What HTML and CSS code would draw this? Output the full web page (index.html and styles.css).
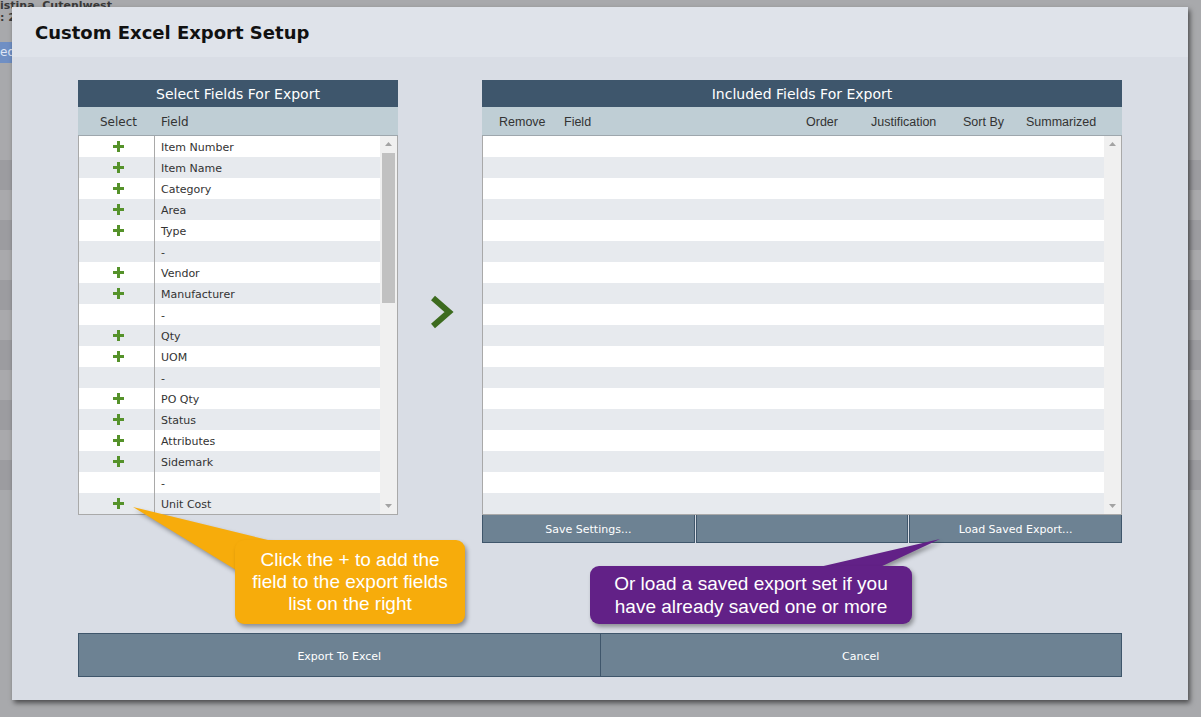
FILE: index.html
```html
<!DOCTYPE html>
<html>
<head>
<meta charset="utf-8">
<link rel="stylesheet" href="styles.css">
</head>
<body>
<div class="backdrop">
  <div class="bg-top">istina&nbsp;&nbsp;Cutenlwest<br>: 2</div>
  <div class="bg-btn">ed</div>
  <div class="bg-rows">
    <div class="bg-row"></div><div class="bg-row alt"></div><div class="bg-row"></div><div class="bg-row alt"></div>
    <div class="bg-row"></div><div class="bg-row alt"></div><div class="bg-row"></div><div class="bg-row alt"></div>
    <div class="bg-row"></div><div class="bg-row alt"></div><div class="bg-row"></div><div class="bg-row alt"></div>
  </div>
</div>

<div class="modal">
  <div class="modal-header">Custom Excel Export Setup</div>
  <div class="modal-body">
    <div class="panels">
      <div class="panel left">
        <div class="panel-title">Select Fields For Export</div>
        <div class="col-head left-head">
          <span class="h-select">Select</span>
          <span class="h-field">Field</span>
        </div>
        <div class="list-wrap">
          <div class="list">
            <div class="row"><span class="sel"><svg class="plus" viewBox="0 0 11 11"><rect x="4" y="0" width="3" height="11"/><rect x="0" y="4" width="11" height="3"/></svg></span><span class="fld">Item Number</span></div>
            <div class="row alt"><span class="sel"><svg class="plus" viewBox="0 0 11 11"><rect x="4" y="0" width="3" height="11"/><rect x="0" y="4" width="11" height="3"/></svg></span><span class="fld">Item Name</span></div>
            <div class="row"><span class="sel"><svg class="plus" viewBox="0 0 11 11"><rect x="4" y="0" width="3" height="11"/><rect x="0" y="4" width="11" height="3"/></svg></span><span class="fld">Category</span></div>
            <div class="row alt"><span class="sel"><svg class="plus" viewBox="0 0 11 11"><rect x="4" y="0" width="3" height="11"/><rect x="0" y="4" width="11" height="3"/></svg></span><span class="fld">Area</span></div>
            <div class="row"><span class="sel"><svg class="plus" viewBox="0 0 11 11"><rect x="4" y="0" width="3" height="11"/><rect x="0" y="4" width="11" height="3"/></svg></span><span class="fld">Type</span></div>
            <div class="row alt"><span class="sel"></span><span class="fld">-</span></div>
            <div class="row"><span class="sel"><svg class="plus" viewBox="0 0 11 11"><rect x="4" y="0" width="3" height="11"/><rect x="0" y="4" width="11" height="3"/></svg></span><span class="fld">Vendor</span></div>
            <div class="row alt"><span class="sel"><svg class="plus" viewBox="0 0 11 11"><rect x="4" y="0" width="3" height="11"/><rect x="0" y="4" width="11" height="3"/></svg></span><span class="fld">Manufacturer</span></div>
            <div class="row"><span class="sel"></span><span class="fld">-</span></div>
            <div class="row alt"><span class="sel"><svg class="plus" viewBox="0 0 11 11"><rect x="4" y="0" width="3" height="11"/><rect x="0" y="4" width="11" height="3"/></svg></span><span class="fld">Qty</span></div>
            <div class="row"><span class="sel"><svg class="plus" viewBox="0 0 11 11"><rect x="4" y="0" width="3" height="11"/><rect x="0" y="4" width="11" height="3"/></svg></span><span class="fld">UOM</span></div>
            <div class="row alt"><span class="sel"></span><span class="fld">-</span></div>
            <div class="row"><span class="sel"><svg class="plus" viewBox="0 0 11 11"><rect x="4" y="0" width="3" height="11"/><rect x="0" y="4" width="11" height="3"/></svg></span><span class="fld">PO Qty</span></div>
            <div class="row alt"><span class="sel"><svg class="plus" viewBox="0 0 11 11"><rect x="4" y="0" width="3" height="11"/><rect x="0" y="4" width="11" height="3"/></svg></span><span class="fld">Status</span></div>
            <div class="row"><span class="sel"><svg class="plus" viewBox="0 0 11 11"><rect x="4" y="0" width="3" height="11"/><rect x="0" y="4" width="11" height="3"/></svg></span><span class="fld">Attributes</span></div>
            <div class="row alt"><span class="sel"><svg class="plus" viewBox="0 0 11 11"><rect x="4" y="0" width="3" height="11"/><rect x="0" y="4" width="11" height="3"/></svg></span><span class="fld">Sidemark</span></div>
            <div class="row"><span class="sel"></span><span class="fld">-</span></div>
            <div class="row alt"><span class="sel"><svg class="plus" viewBox="0 0 11 11"><rect x="4" y="0" width="3" height="11"/><rect x="0" y="4" width="11" height="3"/></svg></span><span class="fld">Unit Cost</span></div>
          </div>
          <div class="scrollbar">
            <svg class="arr" viewBox="0 0 17 17"><polygon points="5,10 12,10 8.5,6"/></svg>
            <div class="track"><div class="thumb"></div></div>
            <svg class="arr" viewBox="0 0 17 17"><polygon points="5,7 12,7 8.5,11"/></svg>
          </div>
        </div>
      </div>

      <div class="gap">
        <svg class="chev" viewBox="0 0 24 34"><polyline points="3,3 19,17 3,31" fill="none" stroke="#3d6b1f" stroke-width="6"/></svg>
      </div>

      <div class="panel right">
        <div class="panel-title">Included Fields For Export</div>
        <div class="col-head right-head">
          <span>Remove</span>
          <span>Field</span>
          <span>Order</span>
          <span>Justification</span>
          <span>Sort By</span>
          <span>Summarized</span>
        </div>
        <div class="list-wrap">
          <div class="list">
            <div class="row"></div><div class="row alt"></div><div class="row"></div><div class="row alt"></div>
            <div class="row"></div><div class="row alt"></div><div class="row"></div><div class="row alt"></div>
            <div class="row"></div><div class="row alt"></div><div class="row"></div><div class="row alt"></div>
            <div class="row"></div><div class="row alt"></div><div class="row"></div><div class="row alt"></div>
            <div class="row"></div><div class="row alt"></div>
          </div>
          <div class="scrollbar">
            <svg class="arr" viewBox="0 0 17 17"><polygon points="5,10 12,10 8.5,6"/></svg>
            <div class="track"></div>
            <svg class="arr" viewBox="0 0 17 17"><polygon points="5,7 12,7 8.5,11"/></svg>
          </div>
        </div>
        <div class="btn-row">
          <div class="btn">Save Settings...</div>
          <div class="btn"></div>
          <div class="btn">Load Saved Export...</div>
        </div>
      </div>
    </div>

    <div class="bottom-row">
      <div class="big-btn">Export To Excel</div>
      <div class="big-btn">Cancel</div>
    </div>
  </div>
</div>

<svg class="pointers" width="1201" height="717" viewBox="0 0 1201 717">
  <polygon class="p-orange" points="133,507 272,541 236,570"/>
  <polygon class="p-purple" points="940,539 815,568 878,568"/>
</svg>
<div class="callout orange">Click the + to add the<br>field to the export fields<br>list on the right</div>
<div class="callout purple">Or load a saved export set if you<br>have already saved one or more</div>
</body>
</html>
```

FILE: styles.css
```css
html, body {
  margin: 0;
  padding: 0;
}
body {
  width: 1201px;
  height: 717px;
  overflow: hidden;
  position: relative;
  background: #a3a3a6;
  font-family: "DejaVu Sans", Verdana, sans-serif;
}

/* faded background app */
.backdrop {
  position: absolute;
  inset: 0;
  background: #a8a9ac;
}
.bg-top {
  position: absolute;
  left: 0;
  top: 0;
  font-size: 11px;
  line-height: 12px;
  color: #3a3a3a;
  font-weight: bold;
}
.bg-btn {
  position: absolute;
  left: 0;
  top: 42px;
  width: 14px;
  height: 21px;
  background: #6f8fc4;
  color: #dfe6f4;
  font-size: 12px;
  line-height: 21px;
}
.bg-rows {
  position: absolute;
  left: 0;
  right: 0;
  top: 130px;
}
.bg-row {
  height: 30px;
  background: #a9a9ac;
}
.bg-row.alt {
  background: #9c9ca0;
}

/* modal */
.modal {
  position: absolute;
  left: 12px;
  top: 7px;
  width: 1176px;
  height: 693px;
  background: #d9dde5;
  box-shadow: 2px 3px 5px rgba(0, 0, 0, 0.55);
}
.modal-header {
  height: 50px;
  line-height: 51px;
  padding-left: 23px;
  background: #dfe3ea;
  font-size: 18px;
  font-weight: bold;
  color: #111;
}
.modal-body {
  padding: 23px 0 0 66px;
}
.panels {
  display: flex;
  align-items: flex-start;
}
.panel.left {
  width: 320px;
}
.panel.right {
  width: 640px;
}
.gap {
  width: 84px;
  height: 435px;
  display: flex;
  align-items: center;
  justify-content: center;
}
.chev {
  width: 24px;
  height: 34px;
  margin-left: 3px;
  margin-top: 28px;
}
.panel-title {
  height: 27px;
  line-height: 29px;
  background: #3e566c;
  color: #fff;
  font-size: 14px;
  text-align: center;
}
.col-head {
  height: 28px;
  line-height: 31px;
  background: #bfced5;
  border-bottom: 1px solid #9ea7ad;
  font-size: 12px;
  color: #333;
}
.left-head {
  display: grid;
  grid-template-columns: 77px 1fr;
}
.h-select {
  text-align: center;
  padding-left: 4px;
}
.h-field {
  padding-left: 6px;
}
.right-head {
  font-family: "Liberation Sans", Arial, sans-serif;
  font-size: 12.5px;
  display: grid;
  grid-template-columns: 65px 242px 65px 92px 63px 1fr;
  padding-left: 17px;
}

.list-wrap {
  display: flex;
  border: 1px solid #a9a9a9;
  border-top: none;
}
.list {
  flex: 1;
}
.row {
  height: 21px;
  background: #ffffff;
  display: grid;
  grid-template-columns: 76px 1fr;
  font-size: 11px;
  color: #333;
  line-height: 23px;
}
.row.alt {
  background: #e7eaee;
}
.sel {
  border-right: 1px solid #a9a9a9;
  display: flex;
  justify-content: center;
  align-items: flex-start;
  padding-top: 5px;
  padding-left: 4px;
}
.fld {
  padding-left: 6px;
}
.plus {
  width: 11px;
  height: 11px;
  fill: #55922a;
}
.scrollbar {
  width: 17px;
  background: #f0f0f0;
  display: flex;
  flex-direction: column;
}
.arr {
  width: 17px;
  height: 17px;
  fill: #a3a3a3;
  flex: none;
}
.track {
  flex: 1;
}
.thumb {
  margin: 0 2px;
  height: 150px;
  background: #c1c1c1;
}

.btn-row {
  display: flex;
  gap: 1px;
  height: 28px;
}
.btn {
  flex: 1;
  background: #6d8293;
  border: 1px solid #3f566b;
  border-top: none;
  color: #fff;
  font-size: 11px;
  line-height: 29px;
  text-align: center;
}

.bottom-row {
  margin-top: 90px;
  width: 1044px;
  display: flex;
}
.big-btn {
  flex: 1;
  height: 42px;
  line-height: 46px;
  background: #6d8293;
  border: 1px solid #3f566b;
  color: #fff;
  font-size: 11px;
  text-align: center;
}
.big-btn + .big-btn {
  border-left: none;
}

/* callouts */
.pointers {
  position: absolute;
  left: 0;
  top: 0;
  pointer-events: none;
  filter: drop-shadow(2px 3px 2px rgba(0, 0, 0, 0.35));
}
.p-orange { fill: #f7ac0b; }
.p-purple { fill: #622187; }
.callout {
  position: absolute;
  color: #fff;
  font-family: "Liberation Sans", Arial, sans-serif;
  font-size: 19px;
  line-height: 22px;
  text-align: center;
  border-radius: 9px;
  box-shadow: 2px 3px 4px rgba(0, 0, 0, 0.35);
  box-sizing: border-box;
}
.callout.orange {
  left: 235px;
  top: 540px;
  width: 230px;
  height: 84px;
  padding-top: 9px;
  background: #f7ac0b;
}
.callout.purple {
  left: 590px;
  top: 566px;
  width: 322px;
  height: 58px;
  padding-top: 6px;
  line-height: 23px;
  background: #622187;
}
```
